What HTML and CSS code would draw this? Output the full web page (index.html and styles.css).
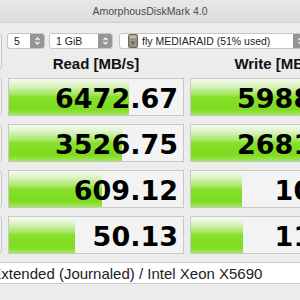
FILE: index.html
```html
<!DOCTYPE html>
<html lang="en">
<head>
    <meta charset="UTF-8">
    <meta name="viewport" content="width=device-width, initial-scale=1.0">
    <title>AmorphousDiskMark 4.0</title>
    <link rel="stylesheet" href="styles.css">
</head>
<body>
    <div class="window">
        <header class="titlebar">AmorphousDiskMark 4.0</header>

        <div class="content">
            <button class="test-btn all">All</button>

            <div class="controls">
                <div class="select sel-count">
                    <span class="select-text">5</span>
                    <span class="stepper">
                        <svg width="7" height="10" viewBox="0 0 7 10"><path d="M1.5 4 L3.5 2 L5.5 4 M1.5 6 L3.5 8 L5.5 6" fill="none" stroke="#fff" stroke-width="1.2"/></svg>
                    </span>
                </div>
                <div class="select sel-size">
                    <span class="select-text">1 GiB</span>
                    <span class="stepper">
                        <svg width="7" height="10" viewBox="0 0 7 10"><path d="M1.5 4 L3.5 2 L5.5 4 M1.5 6 L3.5 8 L5.5 6" fill="none" stroke="#fff" stroke-width="1.2"/></svg>
                    </span>
                </div>
                <div class="select sel-drive">
                    <svg class="drive-icon" width="10" height="14" viewBox="0 0 10 14">
                        <rect x="0.5" y="0.5" width="9" height="13" rx="1" fill="#8f8b78" stroke="#6c6856"/>
                        <rect x="1.5" y="1.5" width="7" height="3" fill="#bdb9a6"/>
                        <circle cx="5" cy="8.8" r="2.8" fill="#1f86e0" stroke="#e79a2a" stroke-width="1"/>
                    </svg>
                    <span class="select-text">fly MEDIARAID (51% used)</span>
                    <span class="stepper">
                        <svg width="7" height="10" viewBox="0 0 7 10"><path d="M1.5 4 L3.5 2 L5.5 4 M1.5 6 L3.5 8 L5.5 6" fill="none" stroke="#fff" stroke-width="1.2"/></svg>
                    </span>
                </div>
            </div>

            <div class="col-head">Read [MB/s]</div>
            <div class="col-head">Write [MB/s]</div>

            <button class="test-btn">SEQ1M<br>QD8</button>
            <div class="cell" style="--w: 120px">6472.67</div>
            <div class="cell" style="--w: 121px">5988.41</div>

            <button class="test-btn">SEQ1M<br>QD1</button>
            <div class="cell" style="--w: 113px">3526.75</div>
            <div class="cell" style="--w: 111px">2681.93</div>

            <button class="test-btn">RND4K<br>QD64</button>
            <div class="cell" style="--w: 93px">609.12</div>
            <div class="cell" style="--w: 51px">10.52</div>

            <button class="test-btn">RND4K<br>QD1</button>
            <div class="cell" style="--w: 66px">50.13</div>
            <div class="cell" style="--w: 52px">11.26</div>

            <div class="comment">Mac OS Extended (Journaled) / Intel Xeon X5690</div>
        </div>
    </div>
</body>
</html>
```

FILE: styles.css
```css
/* ===== RESET & BASE ===== */
* {
    margin: 0;
    padding: 0;
    box-sizing: border-box;
}

body {
    font-family: "Liberation Sans", Arial, sans-serif;
    background: #ececec;
    color: #222;
    overflow: hidden;
}

/* ===== WINDOW ===== */
.window {
    width: 470px;
    margin-left: -85px;
}

.titlebar {
    height: 23px;
    line-height: 22px;
    text-align: center;
    font-size: 10.5px;
    color: #4b4b4b;
    background: linear-gradient(#e8e8e8, #dddddd);
    border-bottom: 1px solid #cdcdcd;
}

.content {
    display: grid;
    grid-template-columns: 78px 176px 176px;
    grid-template-rows: 16px 13px repeat(4, 38px) 22px;
    gap: 8px 6px;
    padding: 10px 0 0 9px;
}

/* ===== LEFT BUTTONS ===== */
.test-btn {
    font-family: inherit;
    font-size: 11px;
    font-weight: bold;
    color: #333;
    background: #f5f5f5;
    border: 1px solid #c3c3c3;
    border-radius: 4px;
}

.test-btn.all {
    grid-row: 1 / 3;
}

/* ===== CONTROLS ===== */
.controls {
    grid-column: 2 / 4;
    display: flex;
    margin-left: -1px;
}

.select {
    display: flex;
    align-items: center;
    height: 16px;
    background: #fff;
    border: 1px solid #c6c6c6;
    border-radius: 3px;
    font-size: 10.5px;
    color: #222;
    padding-left: 6px;
}

.select-text {
    white-space: nowrap;
}

.stepper {
    margin-left: auto;
    width: 14px;
    height: 100%;
    background: #959595;
    border-radius: 0 2px 2px 0;
    display: flex;
    align-items: center;
    justify-content: center;
}

.sel-count {
    width: 38px;
    margin-right: 4px;
}

.sel-size {
    width: 64px;
    margin-right: 6px;
}

.sel-drive {
    width: 189px;
    padding-left: 8px;
}

.drive-icon {
    margin-right: 4px;
    flex-shrink: 0;
}

/* ===== RESULTS ===== */
.col-head {
    font-size: 15px;
    font-weight: bold;
    line-height: 13px;
    text-align: center;
    color: #111;
}

.cell {
    display: flex;
    align-items: center;
    justify-content: flex-end;
    padding: 3px 5px 0 0;
    border: 1px solid #c8c8c8;
    background-color: #f3f3f3;
    background-image: linear-gradient(to bottom, #f6f9f2 0%, #dcf3c6 18%, #ace96c 40%, #86e02b 50%, #7edc1e 84%, #a2e75c 100%);
    background-repeat: no-repeat;
    background-size: var(--w) 100%;
    font-family: "DejaVu Sans", sans-serif;
    font-weight: bold;
    font-size: 27px;
    color: #000;
    white-space: nowrap;
}

/* ===== COMMENT ===== */
.comment {
    grid-column: 1 / 4;
    display: flex;
    align-items: center;
    padding-left: 8px;
    background: #fff;
    border: 1px solid #cbcbcb;
    font-size: 15px;
    color: #222;
    white-space: nowrap;
}
```
